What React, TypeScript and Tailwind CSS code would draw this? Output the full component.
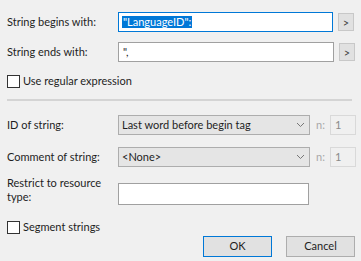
import React from "react";

const font = { fontFamily: 'Lato, "Noto Sans", sans-serif' };

function ArrowButton() {
  return (
    <button className="ml-[5px] flex h-[18px] w-[16px] items-center justify-center border border-[#c8c8c8] bg-[#e1e1e1] text-[11px] leading-none text-[#444]">
      &gt;
    </button>
  );
}

function Check({ label }: { label: string }) {
  return (
    <label className="flex h-[15px] items-center">
      <span className="h-[13px] w-[13px] border border-[#333] bg-white" />
      <span className="ml-[3px] text-[11px] text-[#1e1e1e]">{label}</span>
    </label>
  );
}

function Chevron() {
  return (
    <svg width="9" height="6" viewBox="0 0 9 6" className="text-[#777]">
      <path d="M1 1l3.5 3.5L8 1" fill="none" stroke="currentColor" strokeWidth="1" />
    </svg>
  );
}

function Combo({ value }: { value: string }) {
  return (
    <div className="flex h-[20px] w-[192px] items-center border border-[#adadad] bg-[#e5e5e5] pl-[3px] pr-[4px]">
      <span className="flex-1 text-[11px] text-[#1e1e1e]">{value}</span>
      <Chevron />
    </div>
  );
}

function NField() {
  return (
    <div className="ml-[6px] flex items-center">
      <span className="text-[11px] text-[#a8a8a8]">n:</span>
      <div className="ml-[5px] flex h-[20px] w-[26px] items-center border border-[#d9d9d9] bg-[#f0f0f0] pl-[4px] text-[11px] text-[#8a8a8a]">
        1
      </div>
    </div>
  );
}

export default function App() {
  return (
    <div className="h-[261px] w-[361px] overflow-hidden bg-[#f0f0f0] pl-[7px] pt-[12px] text-[11px] text-[#1e1e1e]" style={font}>
      <div className="flex h-[20px] items-center">
        <span className="w-[111px]">String begins with:</span>
        <div className="flex h-[20px] w-[215px] items-center border border-[#0078d7] bg-white pl-[3px]">
          <span className="bg-[#0078d7] px-[1px] leading-[12px] text-white">"LanguageID":</span>
        </div>
        <ArrowButton />
      </div>

      <div className="mt-[10px] flex h-[20px] items-center">
        <span className="w-[111px]">String ends with:</span>
        <div className="flex h-[20px] w-[216px] items-center border border-[#a0a0a0] bg-white pl-[4px]">
          ",
        </div>
        <ArrowButton />
      </div>

      <div className="mt-[12px]">
        <Check label="Use regular expression" />
      </div>

      <div className="mr-[9px] mt-[10px] h-[2px] bg-[#d4d4d4]" />

      <div className="mt-[14px] flex h-[20px] items-center">
        <span className="w-[111px]">ID of string:</span>
        <Combo value="Last word before begin tag" />
        <NField />
      </div>

      <div className="mt-[12px] flex h-[20px] items-center">
        <span className="w-[111px]">Comment of string:</span>
        <Combo value="<None>" />
        <NField />
      </div>

      <div className="mt-[9px] flex items-start">
        <span className="w-[111px] leading-[14px]">
          Restrict to resource
          <br />
          type:
        </span>
        <div className="mt-[7px] h-[22px] w-[191px] border border-[#a0a0a0] bg-white" />
      </div>

      <div className="mt-[15px]">
        <Check label="Segment strings" />
      </div>

      <div className="mt-[1px] flex justify-end pr-[6px]">
        <button className="h-[21px] w-[69px] border border-[#0078d7] bg-[#e1e1e1] text-[11px] text-[#1e1e1e]">OK</button>
        <button className="ml-[14px] h-[21px] w-[69px] border border-[#adadad] bg-[#e1e1e1] text-[11px] text-[#1e1e1e]">Cancel</button>
      </div>
    </div>
  );
}
